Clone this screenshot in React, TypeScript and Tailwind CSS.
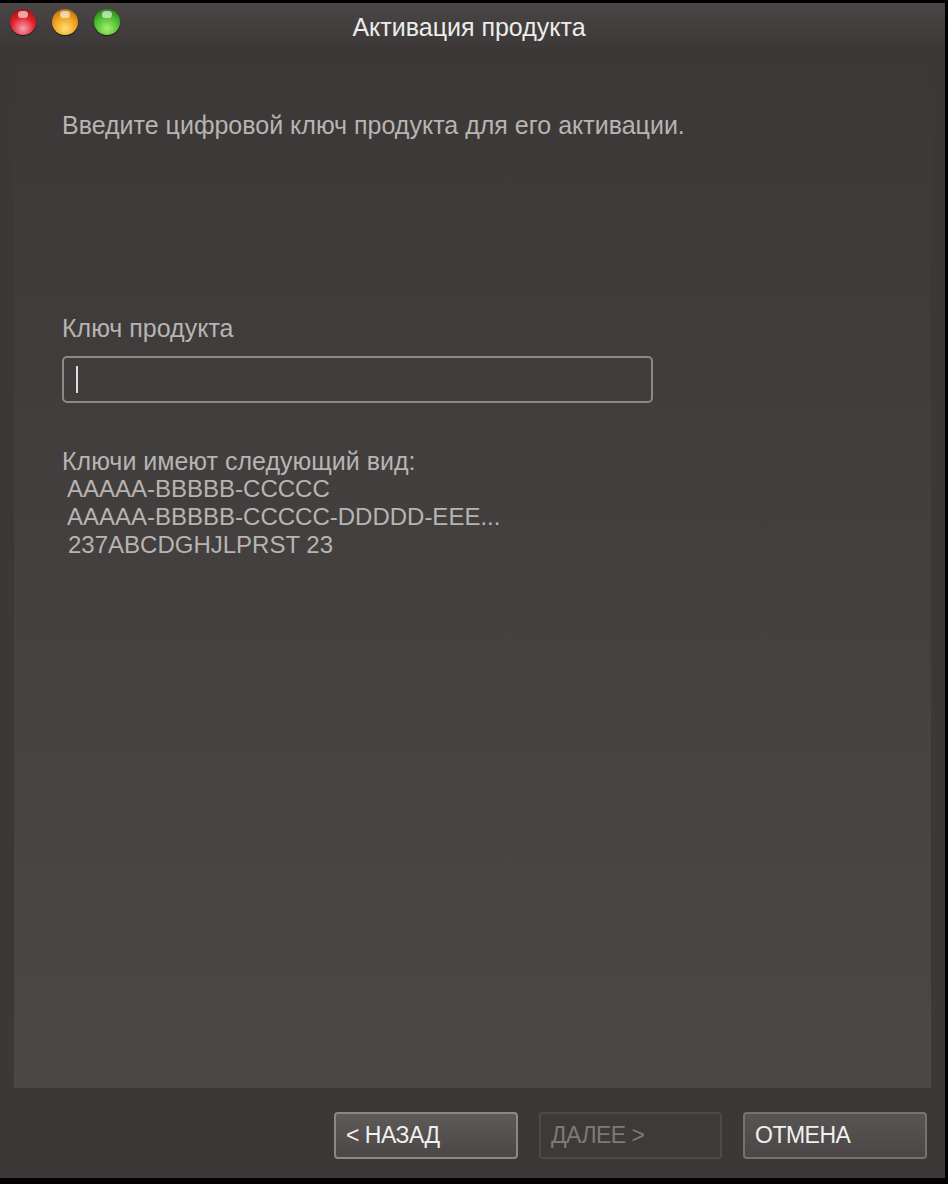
import React from "react";

const font = { fontFamily: '"Liberation Sans", Arial, sans-serif' };

function Light({ from, via, to }: { from: string; via: string; to: string }) {
  return (
    <span
      className="relative block h-[26px] w-[26px] rounded-full shadow-[0_1px_1px_rgba(0,0,0,0.6)]"
      style={{ background: `radial-gradient(circle at 50% 75%, ${to} 0%, ${via} 50%, ${from} 100%)` }}
    >
      <span className="absolute left-[8px] top-[2px] h-[7px] w-[10px] rounded-full bg-white/60" />
    </span>
  );
}

export default function App() {
  return (
    <div className="h-[1184px] w-[948px] overflow-hidden bg-black" style={font}>
      <div className="flex h-[1178px] w-[945px] flex-col border-t-[3px] border-black bg-[#3b3837]">
        {/* title bar */}
        <div className="relative flex h-[46px] shrink-0 justify-center bg-gradient-to-b from-[#4a4645] to-[#3b3837]">
          <div className="absolute left-[10px] top-[6px] flex gap-[16px]">
            <Light from="#8a0a0a" via="#e0202a" to="#f6a0b0" />
            <Light from="#a05a00" via="#f0a020" to="#fde070" />
            <Light from="#1e6a10" via="#4cc030" to="#a8ec70" />
          </div>
          <span className="ml-[-7px] mt-[10px] text-[25px] leading-[28px] text-[#ececec]">Активация продукта</span>
        </div>

        {/* content panel */}
        <div className="mx-[14px] flex flex-1 flex-col bg-gradient-to-b from-[#3b3837] to-[#4b4848] px-[48px] text-[25px] leading-[28px] text-[#b7b4b2]">
          <p className="mt-[62px]">Введите цифровой ключ продукта для его активации.</p>

          <p className="mt-[175px]">Ключ продукта</p>
          <div className="mt-[14px] flex h-[47px] w-[591px] items-center rounded-[5px] border-2 border-[#8c8987] px-[12px]">
            <span className="block h-[27px] w-[2px] bg-[#dcdcdc]" />
          </div>

          <div className="mt-[44px]">
            <p>Ключи имеют следующий вид:</p>
            <div className="text-[24px]">
              <p className="pl-[5px]">AAAAA-BBBBB-CCCCC</p>
              <p className="pl-[5px]">AAAAA-BBBBB-CCCCC-DDDDD-EEE...</p>
              <p className="pl-[6px]">237ABCDGHJLPRST 23</p>
            </div>
          </div>
        </div>

        {/* footer */}
        <div className="flex h-[90px] shrink-0 items-center justify-end gap-[21px] pr-[18px] pt-[4px] text-[23px]">
          <button className="flex h-[47px] w-[184px] items-center rounded-[4px] border-2 border-[#8b8886] bg-gradient-to-b from-[#5d5a58] to-[#4a4746] px-[10px] tracking-[-0.5px] text-[#f0f0f0]">
            &lt; НАЗАД
          </button>
          <button className="flex h-[47px] w-[183px] items-center rounded-[4px] border-2 border-[#4d4a48] bg-[#3d3b3a] px-[10px] tracking-[-0.5px] text-[#7d7a78]">
            ДАЛЕЕ &gt;
          </button>
          <button className="flex h-[47px] w-[184px] items-center rounded-[4px] border-2 border-[#757270] bg-gradient-to-b from-[#575452] to-[#4a4746] px-[10px] tracking-[-0.5px] text-[#f0f0f0]">
            ОТМЕНА
          </button>
        </div>
      </div>
    </div>
  );
}
